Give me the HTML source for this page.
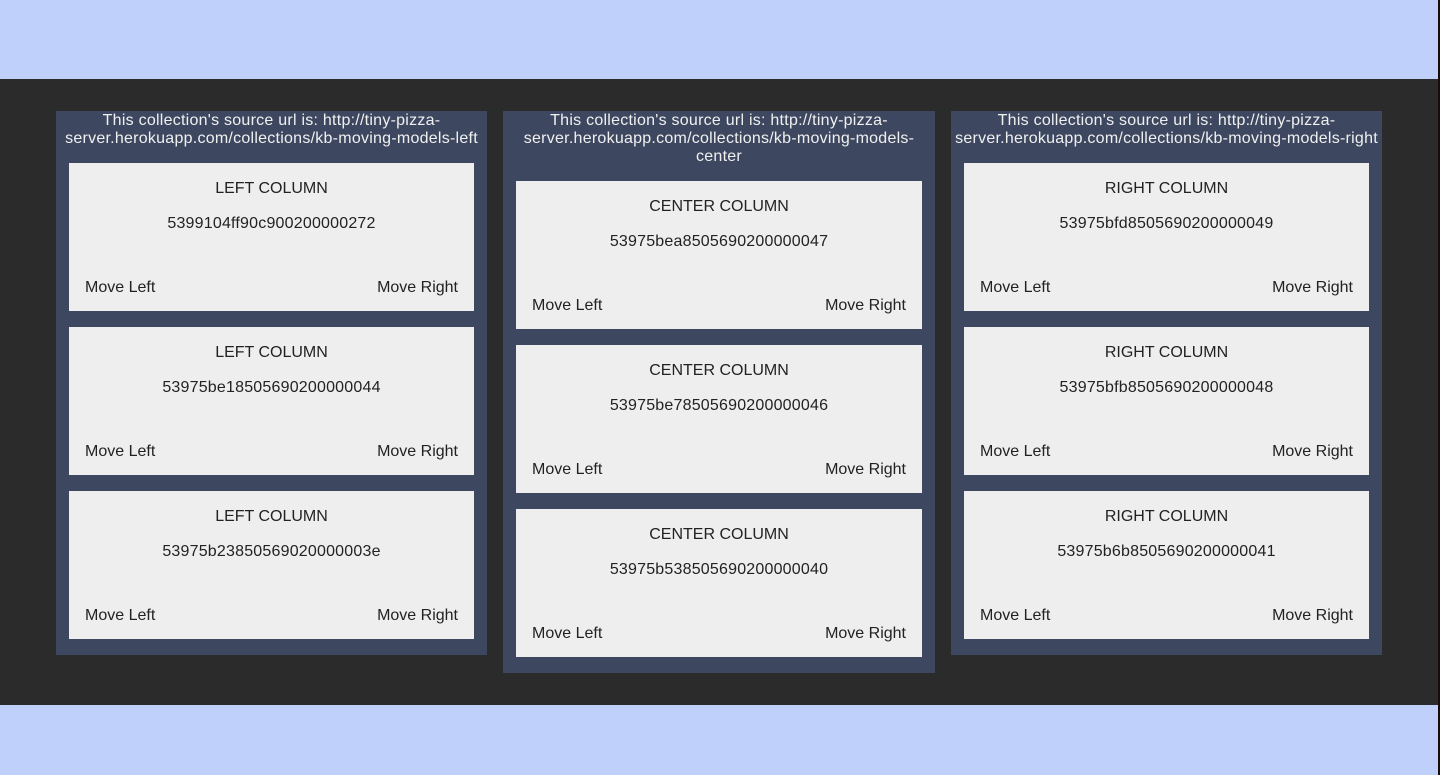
<!DOCTYPE html>
<html><head><style>
html,body{margin:0;padding:0;width:1440px;height:775px;overflow:hidden;background:#bfd0fb;font-family:"Liberation Sans",sans-serif}
.band{position:absolute;left:0;top:79px;width:1440px;height:626px;background:#2b2b2b}
.edge{position:absolute;right:0;top:0;width:2px;height:775px;background:#1a0a0a}
.col{position:absolute;top:111px;width:431px;background:#3d4860;padding-bottom:0}
.hdr{color:#f0f0f0;font-size:16px;line-height:18px;text-align:center;padding:1px 4px 0;height:35px;margin-bottom:16px;letter-spacing:0.25px}
.hdr.three{height:53px}
.card{position:relative;margin:0 13px 16px;height:148px;background:#eeeeee;color:#222;font-size:16px}
.card div{position:absolute;line-height:20px}
.t{top:16px;left:0;right:0;text-align:center}
.i{top:51px;left:0;right:0;text-align:center;letter-spacing:0.2px}
.l{top:115px;left:16px}
.r{top:115px;right:16px}
</style></head><body>
<div class="band"></div>
<div class="edge"></div>

<div class="col" style="left:56px">
<div class="hdr">This collection's source url is: http://tiny-pizza-server.herokuapp.com/collections/kb-moving-models-left</div>
<div class="card"><div class="t">LEFT COLUMN</div><div class="i">5399104ff90c900200000272</div><div class="l">Move Left</div><div class="r">Move Right</div></div>
<div class="card"><div class="t">LEFT COLUMN</div><div class="i">53975be18505690200000044</div><div class="l">Move Left</div><div class="r">Move Right</div></div>
<div class="card"><div class="t">LEFT COLUMN</div><div class="i">53975b23850569020000003e</div><div class="l">Move Left</div><div class="r">Move Right</div></div>
</div>

<div class="col" style="left:503px;width:432px">
<div class="hdr three">This collection's source url is: http://tiny-pizza-server.herokuapp.com/collections/kb-moving-models-center</div>
<div class="card"><div class="t">CENTER COLUMN</div><div class="i">53975bea8505690200000047</div><div class="l">Move Left</div><div class="r">Move Right</div></div>
<div class="card"><div class="t">CENTER COLUMN</div><div class="i">53975be78505690200000046</div><div class="l">Move Left</div><div class="r">Move Right</div></div>
<div class="card"><div class="t">CENTER COLUMN</div><div class="i">53975b538505690200000040</div><div class="l">Move Left</div><div class="r">Move Right</div></div>
</div>

<div class="col" style="left:951px">
<div class="hdr">This collection's source url is: http://tiny-pizza-server.herokuapp.com/collections/kb-moving-models-right</div>
<div class="card"><div class="t">RIGHT COLUMN</div><div class="i">53975bfd8505690200000049</div><div class="l">Move Left</div><div class="r">Move Right</div></div>
<div class="card"><div class="t">RIGHT COLUMN</div><div class="i">53975bfb8505690200000048</div><div class="l">Move Left</div><div class="r">Move Right</div></div>
<div class="card"><div class="t">RIGHT COLUMN</div><div class="i">53975b6b8505690200000041</div><div class="l">Move Left</div><div class="r">Move Right</div></div>
</div>
</body></html>
